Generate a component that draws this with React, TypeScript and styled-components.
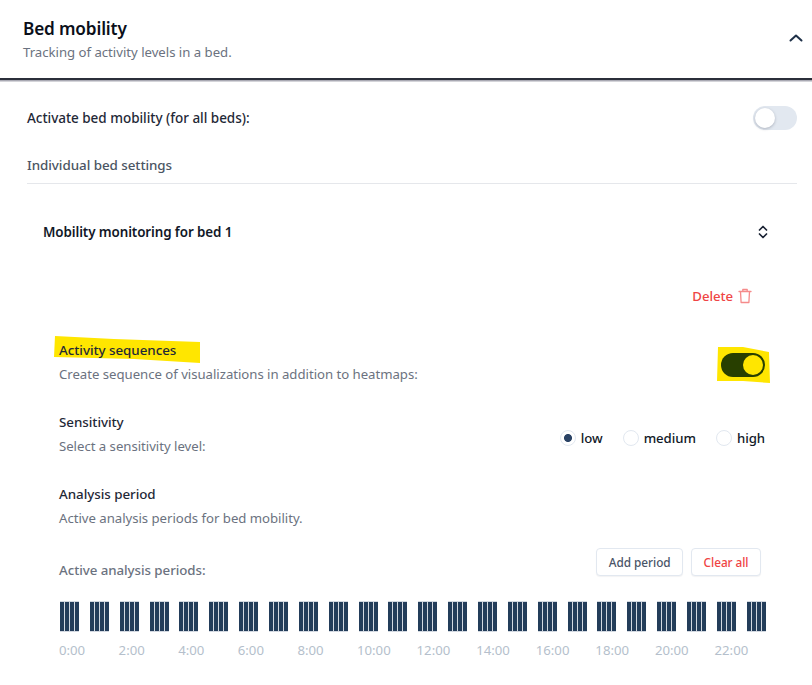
import styled, { createGlobalStyle } from 'styled-components'

const GlobalStyle = createGlobalStyle`
  html, body {
    margin: 0;
    padding: 0;
    background: #fff;
    overflow: hidden;
  }
  body {
    font-family: 'Noto Sans', 'Open Sans', sans-serif;
    color: #111827;
  }
`

const Page = styled.div`
  width: 812px;
  height: 685px;
  overflow: hidden;
`

const Header = styled.header`
  height: 80px;
  box-sizing: border-box;
  padding: 0 8px 0 23px;
  display: flex;
  justify-content: space-between;
  align-items: center;
  border-bottom: 2px solid #2b2f3a;
  box-shadow: 0 1.5px 0 #a9a9b3;
`

const HeaderText = styled.div`
  margin-top: 2px;
`

const Title = styled.h1`
  margin: 0;
  font-size: 17.2px;
  line-height: 24px;
  font-weight: 600;
  letter-spacing: -0.15px;
  color: #0b0f1a;
`

const Subtitle = styled.p`
  margin: 0;
  font-size: 13.2px;
  line-height: 22px;
  color: #6b7280;
  letter-spacing: -0.02px;
`

const Body = styled.main`
  padding: 0 15px 0 27px;
`

const ActivateRow = styled.div`
  height: 76px;
  display: flex;
  align-items: center;
  justify-content: space-between;
`

const ActivateLabel = styled.span`
  font-size: 13.5px;
  font-weight: 500;
  color: #1f2937;
  letter-spacing: -0.03px;
`

const SectionHeading = styled.div`
  height: 26px;
  margin-top: -4px;
  padding-bottom: 5px;
  border-bottom: 1px solid #e5e7eb;
  display: flex;
  align-items: center;
  font-size: 13.4px;
  font-weight: 500;
  color: #4b5563;
  letter-spacing: -0.05px;
`

const AccordionBar = styled.div`
  height: 96px;
  padding: 0 28px 0 16px;
  display: flex;
  align-items: center;
  justify-content: space-between;
  font-size: 13.4px;
  font-weight: 600;
  color: #111827;
  letter-spacing: -0.1px;
`

const DeleteRow = styled.div`
  display: flex;
  justify-content: flex-end;
  align-items: center;
  gap: 4px;
  height: 24px;
  padding-right: 44px;
  margin-top: 4px;
  color: #ef4444;
  font-size: 13.2px;
  font-weight: 500;
  letter-spacing: -0.05px;
`

const Settings = styled.div`
  padding: 0 32px 0 32px;
`

const Setting = styled.section`
  display: flex;
  justify-content: space-between;
  align-items: center;
  height: 72px;
`

const FirstSetting = styled(Setting)`
  margin-top: 18px;
`

const SettingTitle = styled.div`
  position: relative;
  isolation: isolate;
  font-size: 13.4px;
  line-height: 24px;
  font-weight: 500;
  color: #1f2937;
  letter-spacing: -0.05px;
`

const SettingDescription = styled.div`
  font-size: 13.2px;
  line-height: 24px;
  color: #6b7280;
  letter-spacing: -0.03px;
`

const TitleInk = styled.svg`
  position: absolute;
  left: -5px;
  top: -2px;
  z-index: -1;
`

const Switch = styled.span<{ $on?: boolean }>`
  position: relative;
  display: inline-block;
  width: 44px;
  height: 24px;
  border-radius: 12px;
  background: ${(p) => (p.$on ? '#283f00' : '#e2e8f0')};
`

const Knob = styled.span<{ $on?: boolean }>`
  position: absolute;
  top: 2px;
  left: ${(p) => (p.$on ? '22px' : '2px')};
  width: 20px;
  height: 20px;
  border-radius: 50%;
  background: ${(p) => (p.$on ? '#ffe600' : '#fff')};
  box-shadow: ${(p) => (p.$on ? 'none' : '0 1px 3px rgba(15, 23, 42, 0.25)')};
`

const SwitchSlot = styled.div`
  position: relative;
  isolation: isolate;
  margin-top: 10px;
`

const SwitchInk = styled.svg`
  position: absolute;
  left: -4px;
  top: -6px;
  z-index: -1;
`

const RadioGroup = styled.div`
  display: flex;
  align-items: center;
  gap: 20px;
  margin-top: 8px;
`

const RadioOption = styled.label`
  display: flex;
  align-items: center;
  gap: 5px;
  font-size: 13.2px;
  font-weight: 500;
  color: #111827;
  letter-spacing: -0.05px;
`

const RadioDot = styled.span<{ $checked?: boolean }>`
  box-sizing: border-box;
  width: 16px;
  height: 16px;
  border-radius: 50%;
  border: 1px solid #e2e8f0;
  background: ${(p) =>
    p.$checked ? 'radial-gradient(circle, #2a4365 0 3.6px, #fff 4.4px)' : '#fff'};
`

const PeriodsHead = styled.div`
  display: flex;
  justify-content: space-between;
  align-items: center;
  height: 28px;
  margin-top: 6px;
  padding-right: 4px;
`

const PeriodsLabel = styled.span`
  margin-top: 16px;
  font-size: 13.3px;
  font-weight: 500;
  color: #6b7280;
  letter-spacing: -0.05px;
`

const Buttons = styled.div`
  display: flex;
  gap: 8px;
`

const Button = styled.button<{ $danger?: boolean }>`
  height: 28px;
  padding: 0 11.5px;
  border: 1px solid #e2e8f0;
  border-radius: 4px;
  background: #fff;
  box-shadow: 0 1px 1px rgba(15, 23, 42, 0.05);
  font-family: inherit;
  font-size: 11.8px;
  font-weight: 500;
  letter-spacing: -0.05px;
  color: ${(p) => (p.$danger ? '#ef4444' : '#4a5568')};
`

const Timeline = styled.div`
  display: grid;
  grid-template-columns: repeat(24, 29.87px);
  margin-top: 25px;
  margin-left: 1px;
`

const Hour = styled.div`
  box-sizing: border-box;
  display: flex;
  gap: 1px;
  width: 19px;
  height: 31px;
  padding: 1px 0;
  background: #d3d9e1;
`

const Tick = styled.span`
  flex: 1;
  background: #233d5a;
`

const Labels = styled.div`
  display: grid;
  grid-template-columns: repeat(12, 59.6px);
  margin-top: 8px;
  font-size: 13.2px;
  line-height: 20px;
  color: #b5bfcc;
`

const hours = Array.from({ length: 24 }, (_, i) => i)
const labels = Array.from({ length: 12 }, (_, i) => `${i * 2}:00`)

function ChevronUp() {
  return (
    <svg width="16" height="16" viewBox="0 0 16 16" fill="none" stroke="#1e3048" strokeWidth="2" strokeLinecap="round" strokeLinejoin="round">
      <path d="M2.5 9.5 8 4.5l5.5 5" />
    </svg>
  )
}

function ChevronsUpDown() {
  return (
    <svg width="12" height="16" viewBox="0 0 12 16" fill="none" stroke="#1a2233" strokeWidth="1.7" strokeLinecap="round" strokeLinejoin="round">
      <path d="M2.5 6 6 2.5 9.5 6M2.5 10 6 13.5 9.5 10" />
    </svg>
  )
}

function TrashIcon() {
  return (
    <svg width="16" height="16" viewBox="0 0 16 16" fill="none" stroke="#f58b8b" strokeWidth="1.3" strokeLinecap="round" strokeLinejoin="round">
      <path d="M2 3.5h12M3.5 3.5l.6 11h7.8l.6-11M5.8 3.5V1.5h4.4v2" />
    </svg>
  )
}

function App() {
  return (
    <Page>
      <GlobalStyle />
      <Header>
        <HeaderText>
          <Title>Bed mobility</Title>
          <Subtitle>Tracking of activity levels in a bed.</Subtitle>
        </HeaderText>
        <ChevronUp />
      </Header>
      <Body>
        <ActivateRow>
          <ActivateLabel>Activate bed mobility (for all beds):</ActivateLabel>
          <Switch>
            <Knob />
          </Switch>
        </ActivateRow>
        <SectionHeading>Individual bed settings</SectionHeading>
        <AccordionBar>
          Mobility monitoring for bed 1
          <ChevronsUpDown />
        </AccordionBar>
        <DeleteRow>
          Delete
          <TrashIcon />
        </DeleteRow>
        <Settings>
          <FirstSetting>
            <div>
              <SettingTitle>
                <TitleInk width="148" height="28" viewBox="0 0 148 28">
                  <path d="M1 0 60 3 146 6 146 27 80 23 0 21Z" fill="#ffe600" />
                </TitleInk>
                Activity sequences
              </SettingTitle>
              <SettingDescription>Create sequence of visualizations in addition to heatmaps:</SettingDescription>
            </div>
            <SwitchSlot>
              <SwitchInk width="53" height="36" viewBox="0 0 53 36">
                <path d="M1 0 26 0 52 5 53 36 26 34 0 34Z" fill="#ffe600" />
              </SwitchInk>
              <Switch $on>
                <Knob $on />
              </Switch>
            </SwitchSlot>
          </FirstSetting>
          <Setting>
            <div>
              <SettingTitle>Sensitivity</SettingTitle>
              <SettingDescription>Select a sensitivity level:</SettingDescription>
            </div>
            <RadioGroup>
              <RadioOption>
                <RadioDot $checked />
                low
              </RadioOption>
              <RadioOption>
                <RadioDot />
                medium
              </RadioOption>
              <RadioOption>
                <RadioDot />
                high
              </RadioOption>
            </RadioGroup>
          </Setting>
          <Setting>
            <div>
              <SettingTitle>Analysis period</SettingTitle>
              <SettingDescription>Active analysis periods for bed mobility.</SettingDescription>
            </div>
          </Setting>
          <PeriodsHead>
            <PeriodsLabel>Active analysis periods:</PeriodsLabel>
            <Buttons>
              <Button>Add period</Button>
              <Button $danger>Clear all</Button>
            </Buttons>
          </PeriodsHead>
          <Timeline>
            {hours.map((h) => (
              <Hour key={h}>
                <Tick />
                <Tick />
                <Tick />
                <Tick />
              </Hour>
            ))}
          </Timeline>
          <Labels>
            {labels.map((l) => (
              <span key={l}>{l}</span>
            ))}
          </Labels>
        </Settings>
      </Body>
    </Page>
  )
}

export default App
